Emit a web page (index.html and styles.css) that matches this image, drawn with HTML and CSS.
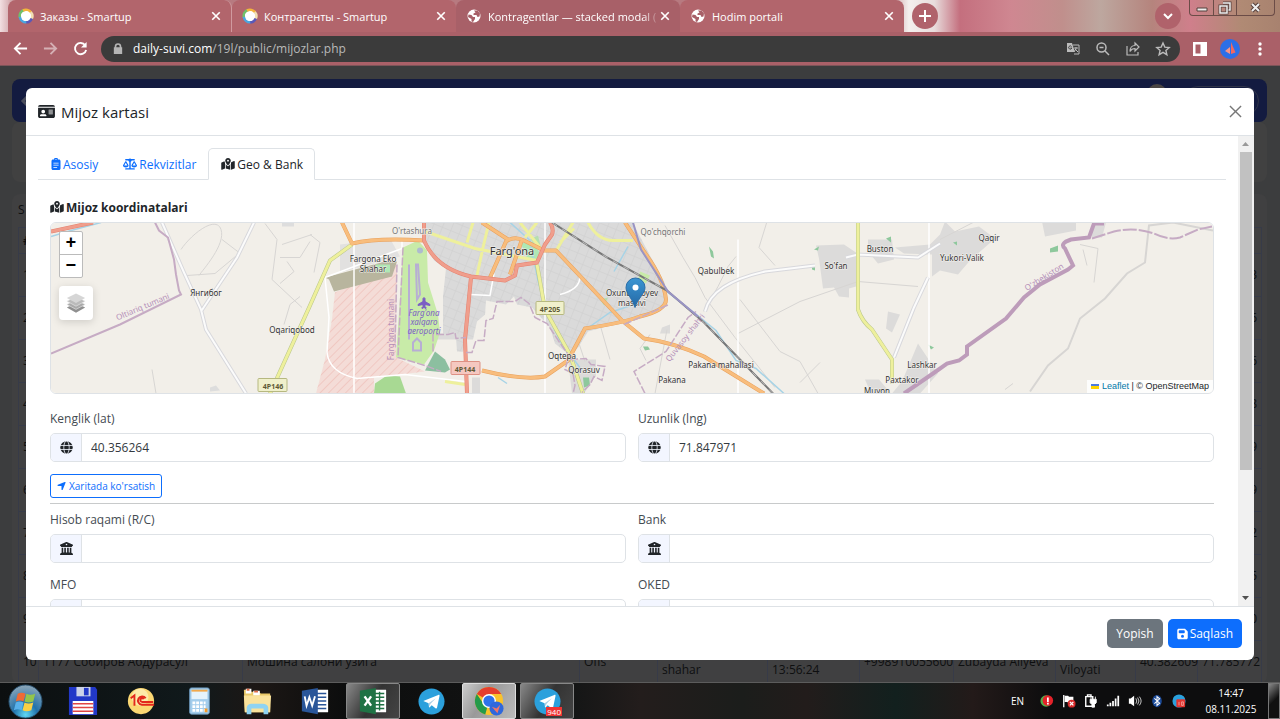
FILE: index.html
```html
<!DOCTYPE html>
<html lang="uz">
<head>
    <meta charset="UTF-8">
    <meta name="viewport" content="width=device-width, initial-scale=1.0">
    <title>Mijoz kartasi</title>
    <link rel="stylesheet" href="styles.css">
</head>
<body>
    <!-- Shared icons -->
    <svg class="sprite" aria-hidden="true">
        <symbol id="i-id-card" viewBox="0 0 576 512"><path d="M0 96h576c0-35-29-64-64-64H64C29 32 0 61 0 96zm0 32v288c0 35 29 64 64 64h448c35 0 64-29 64-64V128zm64 277c0-29 24-53 53-53h118c29 0 53 24 53 53 0 6-5 11-11 11H75c-6 0-11-5-11-11zM176 192a64 64 0 1 1 0 128 64 64 0 1 1 0-128zm176 16c0-9 7-16 16-16h128c9 0 16 7 16 16s-7 16-16 16H368c-9 0-16-7-16-16zm0 64c0-9 7-16 16-16h128c9 0 16 7 16 16s-7 16-16 16H368c-9 0-16-7-16-16zm0 64c0-9 7-16 16-16h128c9 0 16 7 16 16s-7 16-16 16H368c-9 0-16-7-16-16z"/></symbol>
        <symbol id="i-clipboard" viewBox="0 0 384 512"><path fill-rule="evenodd" d="M112 64a80 80 0 0 1 160 0h48c35 0 64 29 64 64v320c0 35-29 64-64 64H64c-35 0-64-29-64-64V128c0-35 29-64 64-64zM192 40a24 24 0 1 0 0 48 24 24 0 1 0 0-48zM80 200v32h224v-32zM80 290v32h224v-32zM80 380v32h160v-32z"/></symbol>
        <symbol id="i-scale" viewBox="0 0 640 512"><path fill-rule="evenodd" d="M384 32h128c18 0 32 14 32 32s-14 32-32 32H398c-5 26-23 48-46 58v294h160c18 0 32 14 32 32s-14 32-32 32H128c-18 0-32-14-32-32s14-32 32-32h160V154c-23-10-41-32-46-58H128c-18 0-32-14-32-32s14-32 32-32h128c15-19 38-32 64-32s49 13 64 32zM440 320h144l-72-124zM512 416c-63 0-115-34-126-79-3-11 1-22 7-32l94-162c5-9 15-14 25-14s20 5 25 14l94 162c6 10 10 21 7 32-11 45-63 79-126 79zM127 196L55 320h144zM1 337c-3-11 1-22 7-32l94-162c5-9 15-14 25-14s20 5 25 14l94 162c6 10 10 21 7 32-11 45-63 79-126 79S12 382 1 337z"/></symbol>
        <symbol id="i-map" viewBox="0 0 576 512"><path d="M408 120c0 55-73 152-105 192-8 10-22 10-30 0-32-40-105-137-105-192C168 54 222 0 288 0s120 54 120 120zm8 80c4-7 7-14 10-20l1-4 116-46c16-7 33 5 33 22v271c0 10-6 18-15 22l-145 58zM138 138c2 14 7 28 12 42 3 6 6 13 10 20v252L33 503c-16 6-33-6-33-23V210c0-10 6-19 15-23zM328 332c14-17 36-46 56-77v249l-192-55V255c21 31 42 60 56 77 21 26 59 26 80 0zM288 152a40 40 0 1 0 0-80 40 40 0 1 0 0 80z"/></symbol>
        <symbol id="i-globe" viewBox="0 0 24 24"><circle cx="12" cy="12" r="11.5"/><g fill="none" stroke="#f3f6ff" stroke-width="1.5"><ellipse cx="12" cy="12" rx="5" ry="12"/><path d="M0 8.3h24M0 15.7h24"/></g></symbol>
        <symbol id="i-bank" viewBox="0 0 512 512"><path d="M243 3L19 99c-14 6-21 21-18 35s16 26 31 26v8c0 13 11 24 24 24h400c13 0 24-11 24-24v-8c15 0 28-11 31-26s-5-29-18-35L269 3c-8-4-18-4-26 0zM128 224H64v196l-2 1-48 32c-12 8-17 23-13 36s17 23 31 23h448c14 0 27-9 31-23s-2-28-13-36l-50-33V224h-64v192h-40V224h-64v192h-48V224h-64v192h-40zM256 64a32 32 0 1 1 0 64 32 32 0 1 1 0-64z"/></symbol>
        <symbol id="i-arrow" viewBox="0 0 448 512"><path d="M430 92c5-12 2-26-7-35s-23-12-35-7L36 194c-14 6-22 21-19 36s16 26 31 26h176v176c0 15 11 28 26 31s30-5 36-19z"/></symbol>
        <symbol id="i-save" viewBox="0 0 448 512"><path d="M64 32C29 32 0 61 0 96v320c0 35 29 64 64 64h320c35 0 64-29 64-64V173c0-17-7-33-19-45l-77-77c-12-12-28-19-45-19zm0 96c0-18 14-32 32-32h192c18 0 32 14 32 32v64c0 18-14 32-32 32H96c-18 0-32-14-32-32zM224 288a64 64 0 1 1 0 128 64 64 0 1 1 0-128z"/></symbol>
        <symbol id="i-x" viewBox="0 0 12 12"><path d="M1.5 1.5l9 9m0-9l-9 9" fill="none" stroke="currentColor" stroke-width="2"/></symbol>
        <symbol id="i-earth" viewBox="0 0 16 16"><circle cx="8" cy="8" r="6.500" fill="#fff"/><path d="M2.5 6.5l3 .5 1.500 2H9v2l-2 3-1.500-.5V11L2 9zM8 2.500l1.500 2-2 1v1.500h3l1 2 2-.5.5-3-2.500-3z" fill="#a86068"/></symbol>
        <symbol id="i-smartup" viewBox="0 0 16 16"><circle cx="8" cy="8" r="5.500" fill="#fff"/><g fill="none" stroke-width="2.600"><path d="M1.900 9.500A6.300 6.300 0 0 1 6 2" stroke="#6fc06a"/><path d="M5 2.500a6.300 6.300 0 0 1 8 1.800" stroke="#f5b43c"/><path d="M12.800 4a6.300 6.300 0 0 1 .8 7" stroke="#f2dfb2"/><path d="M13.800 10.400a6.300 6.300 0 0 1-6 3.900" stroke="#5a58b8"/><path d="M8.300 14.300a6.300 6.300 0 0 1-6.400-5.500" stroke="#4ba6e0"/></g><ellipse cx="8" cy="8" rx="4" ry="5" transform="rotate(35 8 8)" fill="#fff"/></symbol>
        <symbol id="i-telegram" viewBox="0 0 28 28"><circle cx="14" cy="14" r="13.500" fill="#2ba0dc"/><path d="M5.500 13.500L21 7.200c1-.3 1.500.2 1.300 1.200l-2.500 11.800c-.2 1-.9 1.200-1.700.7l-3.900-2.900-2 1.900c-.5.4-.9.200-.9-.6l-.3-3.500z" fill="#fff"/><path d="M11 15.800l7.500-5.300-5.700 6.200-.5 2.800z" fill="#a9cfe6"/></symbol>
    </svg>

    <!-- Browser window -->
    <header class="browser">
        <div class="tab-strip">
            <div class="browser-tab"><svg class="favicon"><use href="#i-smartup"/></svg><span class="tab-title">Заказы - Smartup</span><button class="tab-close" aria-label="Close tab"><svg><use href="#i-x"/></svg></button></div>
            <div class="browser-tab"><svg class="favicon"><use href="#i-smartup"/></svg><span class="tab-title">Контрагенты - Smartup</span><button class="tab-close" aria-label="Close tab"><svg><use href="#i-x"/></svg></button></div>
            <div class="browser-tab dark"><svg class="favicon"><use href="#i-earth"/></svg><span class="tab-title faded">Kontragentlar — stacked modal (</span><button class="tab-close" aria-label="Close tab"><svg><use href="#i-x"/></svg></button></div>
            <div class="browser-tab"><svg class="favicon"><use href="#i-earth"/></svg><span class="tab-title">Hodim portali</span><button class="tab-close" aria-label="Close tab"><svg><use href="#i-x"/></svg></button></div>
            <button class="round-btn" aria-label="New tab"><svg viewBox="0 0 26 26"><path d="M13 7v12M7 13h12" stroke="#fff" stroke-width="2"/></svg></button>
            <button class="round-btn tab-search" aria-label="Search tabs"><svg viewBox="0 0 26 26"><path d="M9 11l4 4 4-4" fill="none" stroke="#fff" stroke-width="2"/></svg></button>
            <div class="window-btns">
                <button aria-label="Minimize"><svg viewBox="0 0 20 15"><path d="M5 8h10v3H5z" fill="#eee" stroke="#55403c"/></svg></button>
                <button aria-label="Restore"><svg viewBox="0 0 20 15"><path d="M8 3h7v7h-2" fill="none" stroke="#55403c" stroke-width="3"/><path d="M8 3h7v7h-2" fill="none" stroke="#eee" stroke-width="1.500"/><path d="M5 6h7v7H5z" fill="none" stroke="#55403c" stroke-width="3"/><path d="M5 6h7v7H5z" fill="none" stroke="#eee" stroke-width="1.500"/></svg></button>
                <button class="wide" aria-label="Close"><svg viewBox="0 0 20 15"><path d="M6 4l7 7m0-7l-7 7" stroke="#55403c" stroke-width="4"/><path d="M6 4l7 7m0-7l-7 7" stroke="#eee" stroke-width="2"/></svg></button>
            </div>
        </div>
        <div class="toolbar">
            <button class="tool-btn" aria-label="Back"><svg viewBox="0 0 16 16"><path d="M15 8H2m6-6L2 8l6 6" fill="none" stroke="#fff" stroke-width="2"/></svg></button>
            <button class="tool-btn muted" aria-label="Forward"><svg viewBox="0 0 16 16"><path d="M1 8h13M8 2l6 6-6 6" fill="none" stroke="#fff" stroke-width="2"/></svg></button>
            <button class="tool-btn" aria-label="Reload"><svg viewBox="0 0 16 16"><path d="M13 4.500A6 6 0 1 0 14 9.500" fill="none" stroke="#fff" stroke-width="2"/><path d="M14.500 1v6h-6z" fill="#fff"/></svg></button>
            <div class="address">
                <svg class="lock" viewBox="0 0 12 14"><path d="M2 5V4a4 4 0 0 1 8 0v1h1v8H1V5zm2 0h4V4a2 2 0 0 0-4 0z" fill="#b5b5b5" fill-rule="evenodd"/></svg>
                <span class="url"><b>daily-suvi.com</b>/19l/public/mijozlar.php</span>
                <svg viewBox="0 0 16 16"><path d="M2 2h5l3 9H2z" fill="#bbb"/><path d="M8 4h6v9H9M9 7h4m-2-1v1c0 2-1 3-2 3m1-2l3 3" fill="none" stroke="#bbb" stroke-width="1"/><path d="M6.500 5.500a1.600 1.600 0 1 0 .3 1.500H5.500" fill="none" stroke="#444"/></svg>
                <svg viewBox="0 0 16 16"><path d="M10 10l4 4M4.500 6.500h4" stroke="#bbb" stroke-width="1.500"/><circle cx="6.500" cy="6.500" r="4.500" fill="none" stroke="#bbb" stroke-width="1.500"/></svg>
                <svg viewBox="0 0 16 16"><path d="M2 5v9h11v-3M10 2l4 4-4 4V7.500c-3 0-4 1-5 3C5 7 7 4.500 10 4.500z" fill="none" stroke="#bbb" stroke-width="1.200"/></svg>
                <svg viewBox="0 0 16 16"><path d="M8 2l1.800 4.100 4.400.4-3.300 2.900 1 4.300L8 11.400l-3.900 2.300 1-4.300-3.300-2.900 4.400-.4z" fill="none" stroke="#bbb" stroke-width="1.400"/></svg>
            </div>
            <svg class="tool-icon" viewBox="0 0 16 16"><path d="M1 1h14v14H1zM3.500 3.500v9h5v-9z" fill="#fff" fill-rule="evenodd"/></svg>
            <svg class="profile" viewBox="0 0 20 20"><circle cx="10" cy="10" r="10" fill="#2c6fe8"/><path d="M11 3l4.500 10.500L11 15z" fill="#f2685f"/><path d="M10 8v7l-5-3z" fill="#f79388"/></svg>
            <svg class="tool-icon" viewBox="0 0 16 16" fill="#fff"><circle cx="8" cy="3" r="1.700"/><circle cx="8" cy="8" r="1.700"/><circle cx="8" cy="13" r="1.700"/></svg>
        </div>
    </header>

    <main class="page">
        <!-- Customer list behind the dialog -->
        <div class="app-bar">
            <svg class="bar-back" viewBox="0 0 14 14"><path d="M8 2L3 7l5 5" fill="none" stroke="#4a4d5c" stroke-width="3"/></svg>
            <span class="bar-avatar"></span>
            <span class="bar-pill"></span>
        </div>
        <div class="list-filter"></div>
        <div class="list-card">
            <div class="list-caption">S</div>
            <table class="list">
                <colgroup><col class="c-num"><col class="c-name"><col class="c-addr"><col class="c-type"><col class="c-city"><col class="c-time"><col class="c-phone"><col class="c-agent"><col class="c-region"><col class="c-lat"><col class="c-lng"></colgroup>
                <thead><tr><th>#</th><th></th><th></th><th></th><th></th><th></th><th></th><th></th><th></th><th></th><th></th></tr></thead>
                <tbody>
                    <tr><td>1</td><td></td><td></td><td></td><td></td><td></td><td></td><td></td><td></td><td></td><td>3</td></tr>
                    <tr><td>2</td><td></td><td></td><td></td><td></td><td></td><td></td><td></td><td></td><td></td><td>6</td></tr>
                    <tr><td>3</td><td></td><td></td><td></td><td></td><td></td><td></td><td></td><td></td><td></td><td>6</td></tr>
                    <tr><td>4</td><td></td><td></td><td></td><td></td><td></td><td></td><td></td><td></td><td></td><td>8</td></tr>
                    <tr><td>5</td><td></td><td></td><td></td><td></td><td></td><td></td><td></td><td></td><td></td><td>9</td></tr>
                    <tr><td>6</td><td></td><td></td><td></td><td></td><td></td><td></td><td></td><td></td><td></td><td>9</td></tr>
                    <tr><td>7</td><td></td><td></td><td></td><td></td><td></td><td></td><td></td><td></td><td></td><td>2</td></tr>
                    <tr><td>8</td><td></td><td></td><td></td><td></td><td></td><td></td><td></td><td></td><td></td><td>5</td></tr>
                    <tr><td>9</td><td></td><td></td><td></td><td></td><td></td><td></td><td></td><td></td><td></td><td>0</td></tr>
                    <tr><td>10</td><td>1177 Собиров Абдурасул</td><td>Мошина салони узига</td><td>Ofis</td><td><br>shahar</td><td><br>13:56:24</td><td>+998910055600</td><td>Zubayda Aliyeva</td><td><br>Viloyati</td><td>40.382609</td><td>71.785772</td></tr>
                </tbody>
            </table>
        </div>

        <section class="modal" role="dialog" aria-labelledby="modalTitle">
            <div class="modal-header">
                <svg class="title-icon"><use href="#i-id-card"/></svg>
                <h1 id="modalTitle">Mijoz kartasi</h1>
                <button class="btn-close" aria-label="Yopish"><svg viewBox="0 0 14 14"><path d="M1 1l12 12M13 1L1 13" stroke="#777" stroke-width="1.500"/></svg></button>
            </div>

            <div class="modal-body">
                <div class="modal-content">
                    <nav class="nav-tabs">
                        <a class="nav-tab" href="#asosiy"><svg class="narrow"><use href="#i-clipboard"/></svg>Asosiy</a>
                        <a class="nav-tab" href="#rekvizitlar"><svg><use href="#i-scale"/></svg>Rekvizitlar</a>
                        <a class="nav-tab active" href="#geo"><svg><use href="#i-map"/></svg>Geo &amp; Bank</a>
                    </nav>

                    <form class="tab-pane">
                        <h2><svg><use href="#i-map"/></svg>Mijoz koordinatalari</h2>

                        <div class="map">
                            <svg class="map-tiles" viewBox="51 223 1162 171" preserveAspectRatio="xMidYMid slice">
                                <defs>
                                    <pattern id="hatch" width="6" height="6" patternUnits="userSpaceOnUse" patternTransform="rotate(45)"><path d="M0 0v6" stroke="#f0c8c2" stroke-width="2"/></pattern>
                                    <pattern id="blocks" width="9" height="9" patternUnits="userSpaceOnUse" patternTransform="rotate(22)"><path d="M0 0h9M0 0v9" stroke="#cecece" stroke-width="1" fill="none"/></pattern>
                                    <linearGradient id="pin" x1="0" y1="0" x2="0" y2="1"><stop offset="0" stop-color="#3b95d2"/><stop offset="1" stop-color="#2468a5"/></linearGradient>
                                </defs>
                                <rect x="51" y="223" width="1162" height="171" fill="#f2efe9"/>

                                <!-- land use -->
                                <path d="M424 222h208l18 34 15 28v22l-25 12-52 14-10 16-8 8-15-12-5-16-18-20-15-3-3-8-8 8-20-4-1 14-8 7-4 18h-6l-4 12h-6l-1-14-13-1v-40l3-28-12-8-12-22z" fill="#dadada"/>
                                <path d="M424 222h208l18 34 15 28v22l-25 12-52 14-10 16-8 8-15-12-5-16-18-20-15-3-3-8-8 8-20-4-1 14-8 7-4 18h-6l-4 12h-6l-1-14-13-1v-40l3-28-12-8-12-22z" fill="url(#blocks)"/>
                                <path d="M487 312l34-10h24l-3 32-40 8h-15z" fill="#dadada" opacity="0"/>
                                <path d="M433 334h25v6h-25zM472 378h8v16h-8zM568 360h28v16l-12 18h-12z" fill="#dcdbda"/>
                                <path d="M340 245l50-6 10 18-60 16z" fill="#e2e1e0"/>
                                <path d="M397 265l-62 28-3 27-7 40-9 34h58v-16l51-6-29-14z" fill="#f4dcd7"/>
                                <path d="M397 265l-62 28-3 27-7 40-9 34h58v-16l51-6-29-14z" fill="url(#hatch)"/>
                                <path d="M325 278l60-16 12 0-5 15-58 15-5-12z" fill="#b8b59e"/>
                                <path d="M403 248l15-7 9 10 1 32 10 32 2 18-6 18-10 14-28-7 4-60z" fill="#c8eba8"/>
                                <path d="M374 394l1-10 12-8 13 1 6 17z" fill="#a8d993"/>
                                <path d="M435 352l10 8 5 10-5 3-20-2z" fill="#8cbfa0"/>
                                <path d="M521 244l12-2 8 14-2 7-12-5zM376 265h14v8h-14z" fill="#aee8b4"/>
                                <path d="M640 272l10 4-4 8-8-4z" fill="#c8eba8"/>
                                <path d="M530 240l8-4 3 12zM600 300l8-2-4 8z" fill="#b5dfb0"/>
                                <path d="M816 246l28-1 12 8v34l-7 2v9l-10-1-5-9-11 1-4-30zM868 240h24l2 20-16 4-10-12zM895 248l35-3 10-10 5-13 10 10 24-5 16 12-25 22-12 14-18-4-8 6v-22l-28-1zM1042 222h34v9l-31 6zM1092 223h14l-4 15h-10zM888 312l12 3-8 18-6-4zM918 344l20 30-18 20h-28l10-12zM865 380h14l12 14h-20zM662 328l8-3v9l-10 0z" fill="#dcdbda"/>
                                <path d="M1050 249l8-3v6l-8 1zM886 239l5-2v6zM953 243l4-1v4zM928 345l6 3-3 2zM709 247l4 5 1 7-3-2zM814 250l5-3-1 4zM812 266h3v5l-3-1zM643 347l5 0 2 3-5 1zM583 378l6 0 1 8-6 2z" fill="#8ec89c"/>
                                <path d="M282 223h12v4h-12zM210 388l6-2 4 5-10 1z" fill="#ddd"/>

                                <!-- minor roads -->
                                <g fill="none" stroke="#d7d5d3" stroke-width="1">
                                    <path d="M181 250c10-15 35-35 40-20s-18 40-22 46M187 276l28-2 24-20M222 240l17 13M265 224l12 16-5 40 30 28M280 258h20l10-16M282 245l30-10M280 284l14-12-7-10M284 325l6-20 10-8M152 370l4 24"/>
                                    <path d="M310 235l10 8-6 30M575 332l10 30M600 325l10 35M650 335l-10 14 6 12M665 226l18 32 12 20 10 20 30 40 40 50M704 312l14-25 10-20 8-10M738 334l62-32 58-20 60 5M767 222l-8 26 16 18M975 222l-35 18M1080 245l18 4-4 34M1083 250l4 16"/>
                                    <path d="M1030 392l18-26 20-17 12-30 25-20 22-25 18-11 4-37 24-3 40 8" stroke-width="2"/>
                                    <path d="M740 300l40 52 20 10 18 32M820 363l-20 20M667 330l-12 64M1005 390l8-6"/>
                                </g>
                                <g fill="none" stroke="#fff" stroke-width="2">
                                    <path d="M325 278l77-29v-10M325 278l4 40-2 35q2 20 30 26l48-4 60 7M470 295l20 1 4-22M560 295q20-5 20-18M354 223v171M545 223v171M738 240v154M929 223v171" stroke-width="1.500"/>
                                </g>
                                <g fill="none" stroke="#d8d8dc" stroke-width="4"><path d="M162 223l22 50 17 37 5 20 40 64M254 223l-17 35-36 54M705 312c5-20 25-32 60-40l50-6M846 258l12-3 60 3 22-14M894 358l20-50 14-30"/></g>
                                <g fill="none" stroke="#fbfbfb" stroke-width="2"><path d="M162 223l22 50 17 37 5 20 40 64M254 223l-17 35-36 54M705 312c5-20 25-32 60-40l50-6M846 258l12-3 60 3 22-14M894 358l20-50 14-30"/></g>

                                <!-- water -->
                                <g fill="none" stroke="#a6d3e6" stroke-width="2">
                                    <path d="M51 237l20-6 30-8M510 223l20 18 8 40 10 35 12 25 22 30M628 247l-14 25M664 290l30 23 22 18 20 30 20 8 28 25M498 378l9 6M640 303l-30 10-20 14" stroke-width="1.500"/>
                                </g>

                                <!-- main roads -->
                                <g fill="none" stroke="#b9c58a" stroke-width="4"><path d="M270 394l40-88 20-45 22-16M858 223v87q4 12 14 20l20 30v24M537 265l8 45 25 45 13 39"/></g>
                                <g fill="none" stroke="#eef09c" stroke-width="3"><path d="M270 394l40-88 20-45 22-16M858 223v87q4 12 14 20l20 30v24M537 265l8 45 25 45 13 39M425 232l50 17 62 12M473 223l-6 20M489 223l-6 25-6 28M540 248l-20-25M525 238l12-15M555 253l18-30M588 223q10 18 25 18h20M445 382l20 3M560 243l14-14"/></g>
                                <g fill="none" stroke="#e8a05c" stroke-width="4" stroke-linejoin="round"><path d="M342 223l10 21q25-6 72-3M482 223l26 17M490 278l16-36q8-6 18-1l20 10 12 0 66 70 22 18q30 4 60 18l60 37M482 371q40 10 63 6l23-16 17-32q40-6 55-12 26-6 26-17-2-20-20-45L625 223M522 240l-12 35"/></g>
                                <g fill="none" stroke="#f8bd7d" stroke-width="3" stroke-linejoin="round"><path d="M342 223l10 21q25-6 72-3M482 223l26 17M490 278l16-36q8-6 18-1l20 10 12 0 66 70 22 18q30 4 60 18l60 37M482 371q40 10 63 6l23-16 17-32q40-6 55-12 26-6 26-17-2-20-20-45L625 223M522 240l-12 35"/></g>
                                <g fill="none" stroke="#e48270" stroke-width="4" stroke-linejoin="round"><path d="M51 232l42-9M424 223v18q12 28 47 36l34 4 10-5 2-10 20-3 8-18 7-10q2-6-2-12M471 278l-6 62 2 54"/></g>
                                <g fill="none" stroke="#f09e8c" stroke-width="3" stroke-linejoin="round"><path d="M51 232l42-9M424 223v18q12 28 47 36l34 4 10-5 2-10 20-3 8-18 7-10q2-6-2-12M471 278l-6 62 2 54"/></g>

                                <!-- railway -->
                                <path d="M552 223l55 35 60 33 37 32 69 71" fill="none" stroke="#777" stroke-width="2"/>
                                <path d="M552 223l55 35 60 33 37 32 69 71" fill="none" stroke="#bbb" stroke-width="1" stroke-dasharray="6 6"/>

                                <!-- borders -->
                                <g fill="none" stroke="#c6abc4">
                                    <path d="M155 223l4 8 9 7 6 22 2 15 3 16 2 4-61 30-69 29" stroke-width="2"/>
                                    <path d="M403 248l-5 110 27 8 16 6M397 265l-2 80M433 352v-17l15 0 7-2 1 6 10-1M466 353h6l4-12h8l2-20 7-2 4-17h18l6-4 8 6 6 14 12 6 12 18 14 20M570 360l16-1 5 6 14 2-3 14-8-4-4 8-8 8M568 360l-3 10 8 4 2 12-2 8M645 394l-11-22 32-20 22-34 8-6M624 325l45-20" stroke-width="1.500" stroke-dasharray="8 2"/>
                                    <path d="M633 223l8 27 27 42 30 25" stroke="#9a94c4" stroke-width="2"/>
                                    <path d="M1104 224h-10l-5 14-18 2q-12 4-6 9l8 17-5 4-28 15-16 13-18 21-39 28v8l-8 6-12 3-14 10-29 20" stroke="#bd9cba" stroke-width="4"/>
                                    <path d="M1092 239l22-7q20-5 40 2 14 7 26 4l18-8 14-3" stroke-width="2" stroke-dasharray="14 2"/>
                                </g>
                                <path d="M409 265v75M418 265l2 30-3 5-1-35zM413 343l4-4 4 4v8h-8z" fill="none" stroke="#b7aed4" stroke-width="2"/>
                                <circle cx="420" cy="251" r="3" fill="#aebbcf"/>
                                <path d="M424 298l1 1v3l5 3v1l-5-1v2l1 1v1l-2-1-2 1v-1l1-1v-2l-5 1v-1l5-3v-3z" fill="#7b5fc4" stroke="#7b5fc4" stroke-width="1"/>

                                <!-- road shields -->
                                <g class="shield">
                                    <rect x="258" y="379" width="29" height="13" rx="1" fill="#f0f0cb" stroke="#b6b880"/><text x="273" y="389">4P146</text>
                                    <rect x="536" y="302" width="28" height="13" rx="1" fill="#f0f0cb" stroke="#b6b880"/><text x="550" y="312">4P205</text>
                                    <rect x="451" y="362" width="29" height="13" rx="1" fill="#f5c8c0" stroke="#dd9184"/><text x="465" y="372">4P144</text>
                                </g>

                                <!-- place names -->
                                <g class="place">
                                    <text class="town" x="512" y="255">Farg'ona</text>
                                    <text x="412" y="234" fill="#777">O'rtashura</text>
                                    <text x="373" y="262">Fargona Eko</text><text x="373" y="272">Shahar</text>
                                    <text x="206" y="296">Янгибог</text>
                                    <text x="292" y="333">Oqariqobod</text>
                                    <text x="663" y="235" fill="#777">Qo'chqorchi</text>
                                    <text x="716" y="274">Qabulbek</text>
                                    <text x="836" y="269">So'fan</text>
                                    <text x="880" y="252">Buston</text>
                                    <text x="962" y="261">Yukori-Valik</text>
                                    <text x="989" y="241">Qaqir</text>
                                    <text x="632" y="296">Oxunboboyev</text><text x="632" y="306">massivi</text>
                                    <text x="562" y="359">Oqtepa</text>
                                    <text x="584" y="373">Qorasuv</text>
                                    <text x="721" y="368">Pakana mahallasi</text>
                                    <text x="672" y="383">Pakana</text>
                                    <text x="922" y="368">Lashkar</text>
                                    <text x="902" y="383">Paxtakor</text>
                                    <text x="877" y="394">Muyon</text>
                                </g>
                                <g class="area">
                                    <text transform="rotate(-23 143 308)" x="143" y="310">Oltiariq tumani</text>
                                    <text transform="rotate(-90 391 330)" x="391" y="333">Farg'ona tumani</text>
                                    <text transform="rotate(-52 685 338)" x="685" y="341">Quvasoy shahri</text>
                                    <text transform="rotate(-32 1045 279)" x="1045" y="280">O'zbekiston</text>
                                </g>
                                <g class="airport"><text x="424" y="316">Farg'ona</text><text x="424" y="325">xalqaro</text><text x="424" y="334">aeroporti</text></g>

                                <!-- marker -->
                                <path d="M635 308c-2-8-9-14-9-20a9.500 9.500 0 0 1 19 0c0 6-8 12-10 20z" fill="url(#pin)" stroke="#2a6da8"/>
                                <circle cx="635.500" cy="288" r="3" fill="#fff"/>
                            </svg>
                            <div class="map-controls">
                                <div class="zoom-box"><button type="button" aria-label="Zoom in">+</button><button type="button" aria-label="Zoom out">−</button></div>
                                <button type="button" class="layers-btn" aria-label="Layers"><svg viewBox="0 0 24 24"><path d="M12 12l10 5-10 5.500L2 17z" fill="#909090"/><path d="M12 8.500l10 5-10 5.500-10-5.500z" fill="#aaa" stroke="#eee" stroke-width=".6"/><path d="M12 5l10 5-10 5.500L2 10z" fill="#bbb" stroke="#eee" stroke-width=".6"/><path d="M12 1.500l10 5-10 5.500L2 6.500z" fill="#d6d6d6"/></svg></button>
                            </div>
                            <div class="attribution"><span class="flag"></span><a href="#leaflet">Leaflet</a> | © OpenStreetMap</div>
                        </div>

                        <div class="fields">
                            <div class="field">
                                <label for="lat">Kenglik (lat)</label>
                                <div class="input-group"><span><svg><use href="#i-globe"/></svg></span><input type="text" id="lat" value="40.356264"></div>
                            </div>
                            <div class="field">
                                <label for="lng">Uzunlik (lng)</label>
                                <div class="input-group"><span><svg><use href="#i-globe"/></svg></span><input type="text" id="lng" value="71.847971"></div>
                            </div>
                        </div>
                        <button type="button" class="btn-outline"><svg><use href="#i-arrow"/></svg>Xaritada ko'rsatish</button>
                        <hr>
                        <div class="fields bank">
                            <div class="field">
                                <label for="account">Hisob raqami (R/C)</label>
                                <div class="input-group"><span><svg><use href="#i-bank"/></svg></span><input type="text" id="account"></div>
                            </div>
                            <div class="field">
                                <label for="bank">Bank</label>
                                <div class="input-group"><span><svg><use href="#i-bank"/></svg></span><input type="text" id="bank"></div>
                            </div>
                            <div class="field">
                                <label for="mfo">MFO</label>
                                <div class="input-group"><span></span><input type="text" id="mfo"></div>
                            </div>
                            <div class="field">
                                <label for="oked">OKED</label>
                                <div class="input-group"><span></span><input type="text" id="oked"></div>
                            </div>
                        </div>
                    </form>
                </div>
                <div class="scrollbar">
                    <svg viewBox="0 0 15 16"><path d="M4 10l3.500-4 3.500 4z" fill="#999"/></svg>
                    <div class="thumb"></div>
                    <svg viewBox="0 0 15 16"><path d="M4 6l3.500 4L11 6z" fill="#505050"/></svg>
                </div>
            </div>

            <div class="modal-footer">
                <button class="btn btn-secondary">Yopish</button>
                <button class="btn btn-primary"><svg><use href="#i-save"/></svg>Saqlash</button>
            </div>
        </section>
    </main>

    <!-- Desktop taskbar -->
    <footer class="taskbar">
        <button class="task start" aria-label="Start"><svg viewBox="0 0 36 36"><defs><radialGradient id="orb" cx=".5" cy=".9" r=".9"><stop offset="0" stop-color="#5fd8f5"/><stop offset=".4" stop-color="#2272ab"/><stop offset="1" stop-color="#8fa7b8"/></radialGradient></defs><circle cx="18" cy="18" r="17" fill="url(#orb)" stroke="#27506d"/><path d="M10 10q4-2 8 0l-2 8q-4-2-8 0z" fill="#ee6a35"/><path d="M19 10q4 2 9 0l-2 8q-5 2-9 0z" fill="#93c54b"/><path d="M8 19q4-2 8 0l-2 8q-4-2-8 0z" fill="#59b0ea"/><path d="M17 19q4 2 9 0l-2 8q-5 2-9 0z" fill="#fbd044"/></svg></button>
        <button class="task" aria-label="Total Commander"><svg viewBox="0 0 32 32"><path d="M1 1h28l2 3v27H1z" fill="#2238c8"/><path d="M9 1h15v10H9z" fill="#ccd3e8"/><path d="M17 2h5v8h-5z" fill="#2238c8"/><path d="M5 16h22v14H5z" fill="#fff"/><path d="M5 19h22M5 23h22M5 27h22" stroke="#e04545" stroke-width="1.500"/></svg></button>
        <button class="task" aria-label="1C"><svg viewBox="0 0 32 32"><circle cx="16" cy="16" r="14" fill="#fbd873"/><circle cx="15" cy="12" r="9" fill="#fdeaa8"/><path d="M5 13l4-3v11M21 13a4.500 4.500 0 1 0-4 7h13M19 14a2 2 0 1 0-2 3h12" fill="none" stroke="#e3281c" stroke-width="2"/></svg></button>
        <button class="task" aria-label="Calculator"><svg viewBox="0 0 32 32"><rect x="6" y="2" width="21" height="28" rx="2" fill="#a3cdec" stroke="#6592b4"/><path d="M8 5h17v9H8z" fill="#e6f3fb"/><path d="M8 5h17" stroke="#f1a84b" stroke-width="2"/><path d="M9 18h14M9 22h14M9 26h14" stroke="#fff" stroke-width="3" stroke-dasharray="3 1"/><path d="M22 24h3v4h-3z" fill="#f49b2c"/></svg></button>
        <button class="task" aria-label="Explorer"><svg viewBox="0 0 32 32"><path d="M2 4h6l2 2h8l2 2h10v20H3z" fill="#e9c868"/><path d="M4 3h6v5H4zM12 5h7v5h-7z" fill="#fff"/><path d="M5 4h3M13 6h4" stroke="#de6a45" stroke-width="2"/><path d="M2 10h29l-1 18H3z" fill="#fae29b"/><path d="M5 29v-6q1-4 5-4h12q5 0 6 4v7h-5v-6H10v6H5z" fill="#8fd3f2"/></svg></button>
        <button class="task" aria-label="Word"><svg viewBox="0 0 32 32"><path d="M16 4h14v24H16z" fill="#fff"/><path d="M18 8h10M18 12h10M18 16h10M18 20h10M18 24h10" stroke="#2a5699" stroke-width="1.500"/><path d="M2 5l17-3v28L2 27z" fill="#2a5699"/><path d="M5 11l2 10 3-9 3 9 3-10" fill="none" stroke="#fff" stroke-width="2"/></svg></button>
        <button class="task open" aria-label="Excel"><svg viewBox="0 0 32 32"><path d="M16 4h14v24H16z" fill="#fff"/><path d="M18 8h10M18 12h10M18 16h10M18 20h10M18 24h10M23 6v20" stroke="#1f7244" stroke-width="1.500"/><path d="M2 5l17-3v28L2 27z" fill="#1f7244"/><path d="M7 11l7 10m0-10L7 21" stroke="#fff" stroke-width="2.500"/></svg></button>
        <button class="task" aria-label="Telegram"><svg class="small"><use href="#i-telegram"/></svg></button>
        <button class="task open current" aria-label="Chrome"><svg viewBox="0 0 32 32"><circle cx="16" cy="16" r="15" fill="#f9c32b"/><path d="M16 16L3 8.500A15 15 0 0 1 29 8.500H16z" fill="#e43e2f"/><path d="M16 16l-4 14.500A15 15 0 0 1 3 8.500L10 19l6 4z" fill="#259a4a"/><circle cx="16" cy="16" r="7.500" fill="#fff"/><circle cx="16" cy="16" r="6" fill="#2f72ea"/><circle cx="24" cy="24" r="7.500" fill="#3068dc"/><path d="M19 22l5 2 4-4-3 9z" fill="#f17567"/></svg></button>
        <button class="task open" aria-label="Telegram, 940"><svg class="small"><use href="#i-telegram"/></svg><span class="badge">940</span></button>
        <div class="tray">
            <span class="lang">EN</span>
            <svg viewBox="0 0 16 16"><circle cx="7" cy="8" r="6.500" fill="#54ad4a"/><circle cx="9" cy="7.500" r="6" fill="#e3222a"/><path d="M9 4v5M9 10v2" stroke="#fff" stroke-width="2"/></svg>
            <svg viewBox="0 0 16 16"><path d="M2 1v14" stroke="#fff" stroke-width="1.500"/><path d="M3 2h4l1 1h5v7H7L6 9H3z" fill="#fff"/><circle cx="11" cy="11" r="4.500" fill="#d92b2b"/><path d="M9 9l4 4m0-4l-4 4" stroke="#fff" stroke-width="1.500"/></svg>
            <svg viewBox="0 0 16 16"><path d="M2 3h8v11H2zM4 1h4v2H4z" fill="none" stroke="#fff" stroke-width="1.600"/><path d="M7 6h7v4l-2 2v3H9v-3l-2-2zM8 3v3m5-3v3" fill="#fff" stroke="#fff"/></svg>
            <svg viewBox="0 0 16 16"><path d="M1 14v-2h2v2zM4 14v-4h2v4zM7 14V8h2v6zM10 14V5h2v9zM13 14V2h2v12z" fill="#fff"/></svg>
            <svg viewBox="0 0 16 16"><path d="M1 5h2l4-3v12l-4-3H1z" fill="#fff"/><path d="M9 5q2 3 0 6M11 4q3 4 0 8M13 3q4 5 0 10" fill="none" stroke="#ddd"/></svg>
            <svg viewBox="0 0 16 16"><ellipse cx="8" cy="8" rx="5.500" ry="7" fill="#1b4a98"/><path d="M5 5l6 5.500L8 13V3l3 2.500L5 11" fill="none" stroke="#fff" stroke-width="1.200"/></svg>
            <svg viewBox="0 0 16 16"><circle cx="8" cy="8" r="7.500" fill="#2ba0dc"/><rect x="5" y="6" width="10" height="9" rx="1" fill="#e2332e"/><path d="M8 9v4M11 9h2v4h-2z" fill="none" stroke="#f3a29e"/></svg>
            <div class="clock"><span>14:47</span><span>08.11.2025</span></div>
        </div>
        <button class="show-desktop" aria-label="Show desktop"></button>
    </footer>
</body>
</html>
```

FILE: styles.css
```css
/* Base styles */
* {
    box-sizing: border-box;
}
body {
    margin: 0;
    height: 100vh;
    display: flex;
    flex-direction: column;
    overflow: hidden;
    font-family: "Open Sans", "Noto Sans", sans-serif;
    font-size: 12px;
    color: #212529;
}
button, input {
    font: inherit;
}
button {
    padding: 0;
    border: none;
    background: none;
    cursor: pointer;
}
svg {
    display: block;
    fill: currentColor;
    flex: none;
}
a {
    text-decoration: none;
}
.sprite {
    position: absolute;
    width: 0;
    height: 0;
}

/* --- Browser window --- */
.browser {
    flex: none;
    color: #fff;
}
.tab-strip {
    display: flex;
    height: 32px;
    padding: 0 5px 0 8px;
    background: linear-gradient(90deg, #f2dfe1 0, #b77a80 20px, #b77a80 69%, #f4f0ee 71%, #e8dcdc 73%, #c46f7e 75%, #cf8791 79%, #c08f8c 83%, #bda79f 86%, #b5847d 90%, #cf7f8b 93%, #b08a74 97%, #a8826f);
}
.browser-tab {
    flex: 0 1 224px;
    min-width: 0;
    display: flex;
    align-items: center;
    padding: 0 10px;
    background: #b2656c;
    border-radius: 8px 8px 0 0;
}
.browser-tab:first-child {
    border-right: 1px solid #d09a9f;
}
.browser-tab.dark {
    background: #a86068;
}
.favicon {
    width: 16px;
    height: 16px;
    margin-right: 6px;
}
.tab-title {
    flex: 1;
    white-space: nowrap;
    font-size: 11px;
}
.tab-title.faded {
    mask-image: linear-gradient(90deg, #000 90%, transparent);
}
.tab-close {
    color: #fff;
}
.tab-close svg {
    width: 10px;
    height: 10px;
}
.round-btn {
    width: 26px;
    height: 26px;
    margin: 3px 0 0 8px;
    border-radius: 50%;
    background: #b0626b;
}
.tab-search {
    margin-left: auto;
}
.window-btns {
    display: flex;
    height: 16px;
    margin-left: 8px;
    border: 1px solid #6b4c47;
    border-top: none;
    border-radius: 0 0 4px 4px;
}
.window-btns button {
    width: 23px;
    display: flex;
    justify-content: center;
}
.window-btns button + button {
    border-left: 1px solid #6b4c47;
}
.window-btns .wide {
    width: 38px;
}
.window-btns svg {
    width: 20px;
    height: 15px;
}
.toolbar {
    display: flex;
    align-items: center;
    height: 34px;
    padding: 0 12px 0 13px;
    background: #aa6068;
    border-bottom: 1px solid #7d5559;
}
.tool-btn {
    width: 30px;
}
.tool-btn svg {
    width: 15px;
    height: 15px;
}
.tool-btn.muted {
    opacity: .5;
}
.address {
    flex: 1;
    display: flex;
    align-items: center;
    gap: 14px;
    height: 26px;
    margin: 0 12px 0 -2px;
    padding: 0 9px 0 12px;
    border-radius: 13px;
    background: #3b3b3b;
}
.address svg {
    width: 16px;
    height: 16px;
}
.address .lock {
    width: 10px;
    height: 12px;
    margin-right: -4px;
}
.url {
    flex: 1;
    color: #b9b9b9;
    font-size: 12px;
}
.url b {
    font-weight: normal;
    color: #fff;
}
.tool-icon {
    width: 16px;
    height: 16px;
}
.profile {
    width: 20px;
    height: 20px;
    margin: 0 12px;
}

/* --- Page behind the dialog --- */
.page {
    position: relative;
    flex: 1;
    min-height: 0;
    overflow: hidden;
    padding: 13px 13px 0 12px;
    background: #3c3d3e;
}
.app-bar {
    display: flex;
    align-items: center;
    height: 43px;
    padding: 0 8px;
    border-radius: 8px;
    background: #131b40;
}
.bar-back {
    width: 14px;
    height: 14px;
    margin-right: auto;
}
.bar-avatar {
    align-self: flex-start;
    width: 20px;
    height: 20px;
    margin: 5px 16px;
    border-radius: 50%;
    background: #4a4644;
}
.bar-pill {
    width: 76px;
    height: 30px;
    border: 1px solid #2e3348;
    border-radius: 15px;
}
.list-filter {
    height: 60px;
    border-radius: 8px;
    background: #414141;
}
.list-card {
    margin-top: 12px;
    padding: 6px 5px 0 6px;
    border-radius: 8px;
    background: #404041;
    color: #0e0f10;
}
.list-caption {
    height: 27px;
    line-height: 20px;
}
.list {
    width: 100%;
    table-layout: fixed;
    border-collapse: collapse;
    line-height: 16px;
}
.list th, .list td {
    padding: 0 4px;
    border: 1px solid #373b48;
    text-align: left;
    white-space: nowrap;
}
.list th {
    height: 26px;
}
.list td {
    height: 43px;
}
.list td:last-child {
    text-align: right;
}
.c-num { width: 20px; }
.c-name { width: 204px; }
.c-type { width: 78px; }
.c-city { width: 110px; }
.c-time { width: 92px; }
.c-phone { width: 94px; }
.c-agent { width: 102px; }
.c-region { width: 80px; }
.c-lat { width: 62px; }
.c-lng { width: 64px; }

/* --- Dialog --- */
.modal {
    position: absolute;
    inset: 22px 26px;
    display: flex;
    flex-direction: column;
    overflow: hidden;
    border-radius: 6px;
    background: #fff;
}
.modal-header {
    display: flex;
    align-items: center;
    gap: 6px;
    height: 48px;
    padding: 0 12px;
    border-bottom: 1px solid #dee2e6;
}
.modal-header h1 {
    flex: 1;
    margin: 0;
    font-size: 15px;
    font-weight: normal;
}
.title-icon {
    width: 17px;
    height: 15px;
}
.btn-close svg {
    width: 13px;
    height: 13px;
}
.modal-body {
    flex: 1;
    min-height: 0;
    display: flex;
}
.modal-content {
    flex: 1;
    overflow: hidden;
    padding: 12px;
}
.scrollbar {
    width: 16px;
    display: flex;
    flex-direction: column;
    background: #f1f1f1;
}
.scrollbar svg {
    width: 15px;
    height: 16px;
}
.thumb {
    height: 318px;
    margin: 0 2px auto;
    background: #c1c1c1;
}

/* Tabs */
.nav-tabs {
    display: flex;
    border-bottom: 1px solid #dee2e6;
}
.nav-tab {
    display: flex;
    align-items: center;
    gap: 2px;
    height: 32px;
    margin-bottom: -1px;
    padding: 0 11px 0 12px;
    border: 1px solid transparent;
    border-radius: 5px 5px 0 0;
    color: #0d6efd;
}
.nav-tab svg, .tab-pane h2 svg {
    width: 14px;
    height: 12px;
}
.nav-tab svg.narrow {
    width: 10px;
}
.nav-tab.active {
    border-color: #dee2e6 #dee2e6 #fff;
    background: #fff;
    color: #212529;
}
.tab-pane {
    padding: 17px 12px 0;
}
.tab-pane h2 {
    display: flex;
    align-items: center;
    gap: 2px;
    height: 20px;
    margin: 0 0 5px;
    font-size: 12px;
    font-weight: bold;
}

/* Map */
.map {
    position: relative;
    height: 172px;
    overflow: hidden;
    border: 1px solid #dee2e6;
    border-radius: 6px;
}
.map-tiles {
    width: 100%;
    height: 100%;
    font-family: "Noto Sans", sans-serif;
    font-size: 8px;
    text-anchor: middle;
}
.place {
    fill: #333;
}
.place text {
    paint-order: stroke;
    stroke: #f4f2ee;
    stroke-width: 1px;
}
.place .town {
    font-size: 11px;
}
.shield {
    font-size: 7px;
    font-weight: bold;
    fill: #5e5a35;
}
.area {
    fill: #b48eb8;
}
.airport {
    fill: #7b5fc4;
    font-style: italic;
}
.map-controls {
    position: absolute;
    top: 8px;
    left: 8px;
}
.zoom-box {
    width: 24px;
    border: 1px solid #bbb;
    border-radius: 2px;
    background: #fff;
}
.zoom-box button {
    display: block;
    width: 22px;
    height: 22px;
    font-family: "Liberation Mono", monospace;
    font-size: 18px;
    font-weight: bold;
    line-height: 22px;
    color: #000;
}
.zoom-box button + button {
    height: 23px;
    border-top: 1px solid #bbb;
}
.layers-btn {
    display: flex;
    align-items: center;
    justify-content: center;
    width: 34px;
    height: 34px;
    margin-top: 8px;
    border-radius: 4px;
    background: #fff;
    box-shadow: 0 2px 8px rgba(0, 0, 0, 0.15);
}
.layers-btn svg {
    width: 22px;
    height: 22px;
}
.attribution {
    position: absolute;
    right: 0;
    bottom: 0;
    padding: 0 4px;
    background: rgba(255, 255, 255, 0.85);
    font-family: "Liberation Sans", sans-serif;
    font-size: 9px;
    line-height: 13px;
}
.attribution a {
    color: #0078a8;
}
.flag {
    display: inline-block;
    width: 8px;
    height: 5px;
    margin-right: 3px;
    background: linear-gradient(#4c7be1 50%, #ffd500 50%);
}

/* Form */
.fields {
    display: grid;
    grid-template-columns: 1fr 1fr;
    gap: 13px 12px;
    margin-top: 16px;
}
.field label {
    display: block;
    height: 18px;
    margin-bottom: 5px;
    line-height: 18px;
    color: #444b52;
}
.input-group {
    display: flex;
    height: 29px;
    border: 1px solid #dee2e6;
    border-radius: 5px;
    overflow: hidden;
}
.input-group span {
    width: 31px;
    display: flex;
    align-items: center;
    justify-content: center;
    border-right: 1px solid #dee2e6;
    background: #f3f6ff;
}
.input-group svg {
    width: 13px;
    height: 13px;
}
.input-group input {
    flex: 1;
    min-width: 0;
    padding: 0 9px;
    border: none;
    background: none;
    color: #343a40;
    outline: none;
}
.btn-outline {
    display: flex;
    align-items: center;
    gap: 3px;
    height: 24px;
    margin-top: 12px;
    padding: 0 6px;
    border: 1px solid #0d6efd;
    border-radius: 3px;
    color: #0d6efd;
    font-size: 10px;
}
.btn-outline svg {
    width: 9px;
    height: 10px;
}
.tab-pane hr {
    margin: 5px 0 0;
    border: none;
    border-top: 1px solid #c8cacb;
}
.fields.bank {
    margin-top: 7px;
}
.modal-footer {
    display: flex;
    align-items: center;
    justify-content: flex-end;
    gap: 5px;
    height: 54px;
    padding: 0 12px;
    border-top: 1px solid #dee2e6;
}
.btn {
    display: flex;
    align-items: center;
    gap: 2px;
    height: 29px;
    padding: 0 9px;
    border-radius: 5px;
    color: #fff;
}
.btn svg {
    width: 11px;
    height: 12px;
}
.btn-secondary {
    background: #6c757d;
}
.btn-primary {
    background: #0d6efd;
}

/* --- Taskbar --- */
.taskbar {
    flex: none;
    display: flex;
    height: 37px;
    border-top: 1px solid #5c5c5c;
    background: linear-gradient(90deg, #0c0f10, #10191b 15%, #1c1715 20%, #0c0d0d 27%, #151616 45%, #231d1c 50%, #1b1d1b 58%, #221c1b 63%, #12201e 70%, #231a19 76%, #0d0d0e 82%);
    color: #fff;
}
.task {
    position: relative;
    display: flex;
    align-items: center;
    justify-content: center;
    width: 54px;
    margin-right: 4px;
    border: 1px solid transparent;
    border-radius: 2px;
}
.task.start {
    width: 50px;
    margin-right: 6px;
}
.task svg {
    width: 30px;
    height: 30px;
}
.task.start svg {
    width: 35px;
    height: 35px;
}
.task svg.small {
    width: 27px;
    height: 27px;
}
.task.open {
    border-color: #888;
    background: linear-gradient(120deg, #888, #333 50%, #444);
}
.task.current {
    border-color: #ddd;
    background: linear-gradient(120deg, #ccc, #999 40%, #bbb);
}
.badge {
    position: absolute;
    right: 11px;
    bottom: 2px;
    padding: 0 1px;
    background: #f03434;
    color: #fff;
    font-size: 8px;
    line-height: 9px;
}
.tray {
    flex: 1;
    display: flex;
    align-items: center;
    justify-content: flex-end;
    gap: 8px;
}
.tray svg {
    width: 14px;
    height: 14px;
}
.lang {
    margin-right: 8px;
    font-size: 10px;
}
.clock {
    display: flex;
    flex-direction: column;
    align-items: center;
    width: 74px;
    font-size: 10px;
    line-height: 16px;
}
.show-desktop {
    width: 12px;
    border: 1px solid #777;
    background: linear-gradient(135deg, #888, #111 50%);
}
```
